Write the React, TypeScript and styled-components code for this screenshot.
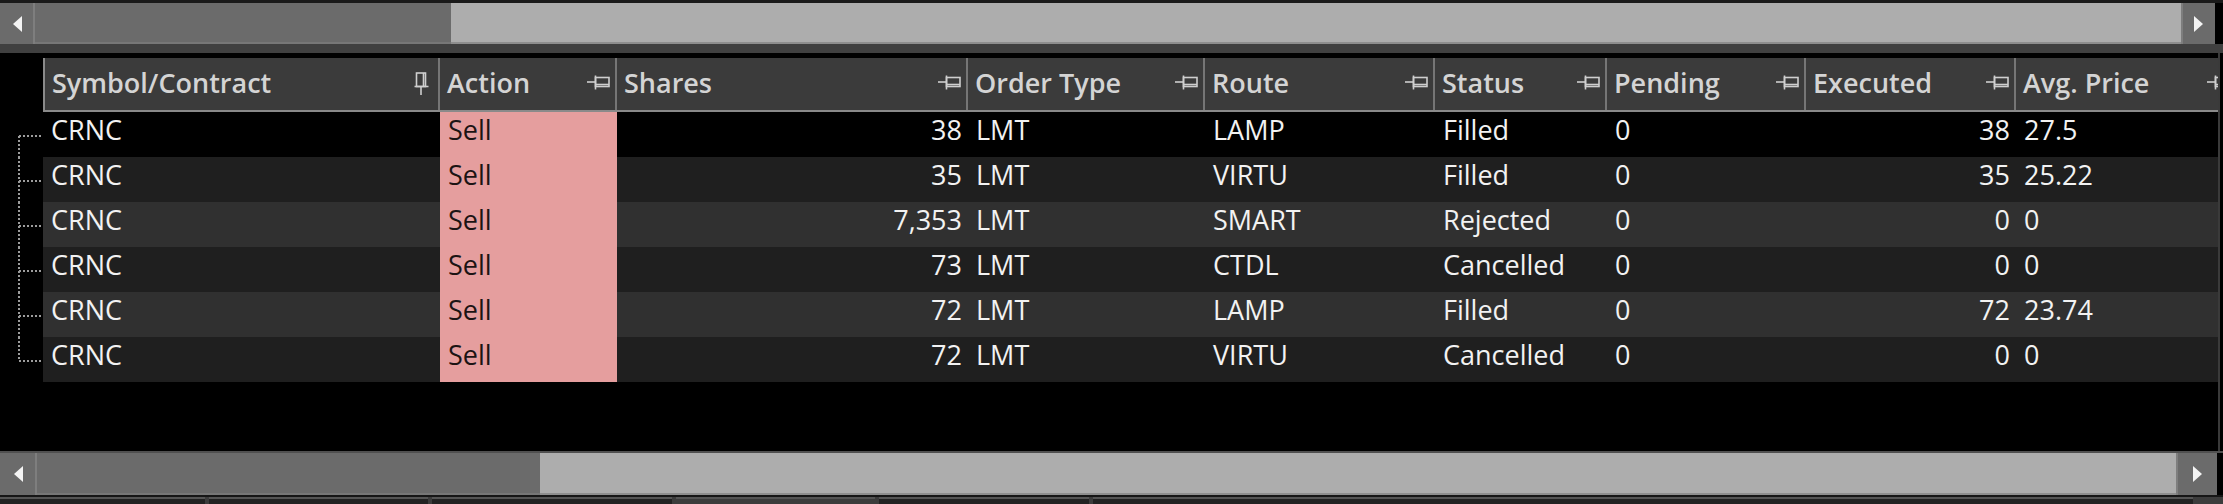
import React from 'react';
import styled, { createGlobalStyle } from 'styled-components';

const GlobalStyle = createGlobalStyle`
  html, body {
    margin: 0;
    padding: 0;
    background: #000;
  }
  body {
    font-family: "Open Sans", "Noto Sans", sans-serif;
  }
`;

/**
 * Window frame
 *
 */
const Frame = styled.div`
  width: 2223px;
  height: 504px;
  display: flex;
  flex-direction: column;
  background: #000;
  overflow: hidden;
`;

const TopEdge = styled.div`
  height: 3px;
  background: #1a1a1a;
`;

const Band = styled.div<{ $h: number; $color: string }>`
  height: ${(p) => p.$h}px;
  background: ${(p) => p.$color};
`;

/**
 * Horizontal scroll bar
 *
 */
const ScrollBar = styled.div<{ $h: number; $endGap: number }>`
  height: ${(p) => p.$h}px;
  display: flex;
  margin-right: ${(p) => p.$endGap}px;
  background: #adadad;
  box-shadow: inset 0 -2px 0 #8e8e8e;
`;

const ArrowButton = styled.div<{ $w: number; $side: 'left' | 'right' }>`
  width: ${(p) => p.$w}px;
  flex: none;
  display: flex;
  align-items: center;
  justify-content: center;
  background: #6b6b6b;
  ${(p) =>
    p.$side === 'left'
      ? 'border-right: 2px solid #7e7e7e;'
      : 'border-left: 2px solid #7e7e7e;'}
`;

const Thumb = styled.div<{ $w: number }>`
  width: ${(p) => p.$w}px;
  flex: none;
  background: #6b6b6b;
  box-shadow: inset 0 -2px 0 #777;
`;

const Track = styled.div`
  flex: 1;
`;

const Arrow = ({ side }: { side: 'left' | 'right' }) => (
  <svg width="10" height="16" viewBox="0 0 10 16">
    <polygon
      points={side === 'left' ? '10,0 10,16 1,8' : '0,0 0,16 9,8'}
      fill="#f4f4f4"
    />
  </svg>
);

const HScroll = ({
  h,
  leftW,
  rightW,
  thumb,
  endGap,
}: {
  h: number;
  leftW: number;
  rightW: number;
  thumb: number;
  endGap: number;
}) => (
  <ScrollBar $h={h} $endGap={endGap}>
    <ArrowButton $w={leftW} $side="left">
      <Arrow side="left" />
    </ArrowButton>
    <Thumb $w={thumb} />
    <Track />
    <ArrowButton $w={rightW} $side="right">
      <Arrow side="right" />
    </ArrowButton>
  </ScrollBar>
);

/**
 * Grid
 *
 */
const GridArea = styled.div`
  flex: 1;
  padding-top: 5px;
  background: #000;
  display: flex;
  flex-direction: column;
  width: 2220px;
  border-right: 2px solid #3a3a3a;
  box-sizing: border-box;
`;

const HeaderRow = styled.div`
  display: flex;
  height: 54px;
`;

const Gutter = styled.div`
  width: 43px;
  flex: none;
  background: #000;
`;

const HeaderCells = styled.div`
  flex: 1;
  display: flex;
  overflow: hidden;
  background: #3b3b3b;
  border-left: 2px solid #8a8a8a;
  border-bottom: 2px solid #8a8a8a;
`;

const HeaderCell = styled.div<{ $w: number }>`
  width: ${(p) => p.$w}px;
  flex: none;
  box-sizing: border-box;
  display: flex;
  align-items: center;
  padding: 0 4px 3px 7px;
  border-right: 2px solid #767676;
  font-size: 27px;
  line-height: 37px;
  font-weight: 600;
  color: #d4d4d4;
  white-space: nowrap;
  &:first-child {
    width: ${(p) => p.$w - 2}px;
  }
`;

const HeaderLabel = styled.span`
  flex: 1;
`;

const PinWrap = styled.span<{ $pinned: boolean }>`
  display: flex;
  flex: none;
  transform: ${(p) => (p.$pinned ? 'rotate(-90deg)' : 'none')};
`;

const PinIcon = ({ pinned }: { pinned: boolean }) => (
  <PinWrap $pinned={pinned}>
    <svg width="24" height="16" viewBox="0 0 24 16">
      <g stroke="#cfcfcf" strokeWidth="1.6" fill="none">
        <line x1="0" y1="7" x2="8" y2="7" />
        <line x1="8.5" y1="0.5" x2="8.5" y2="14.5" />
        <rect x="8.5" y="2.5" width="13.5" height="9" />
        <line x1="9" y1="9.5" x2="22" y2="9.5" />
      </g>
    </svg>
  </PinWrap>
);

const Body = styled.div`
  display: flex;
  flex-direction: column;
`;

const Row = styled.div`
  display: flex;
  height: 45px;
`;

const Cells = styled.div<{ $bg: string }>`
  flex: 1;
  display: flex;
  overflow: hidden;
  background: ${(p) => p.$bg};
`;

const Cell = styled.div<{
  $w: number;
  $align: 'left' | 'right';
  $highlight?: boolean;
}>`
  width: ${(p) => p.$w}px;
  flex: none;
  box-sizing: border-box;
  padding: 0 6px 0 8px;
  font-size: 27px;
  line-height: 35px;
  white-space: nowrap;
  text-align: ${(p) => p.$align};
  color: ${(p) => (p.$highlight ? '#1c1414' : '#f2f2f2')};
  background: ${(p) => (p.$highlight ? '#e59e9e' : 'transparent')};
`;

const TreeLine = ({ first, last }: { first: boolean; last: boolean }) => (
  <svg width="43" height="45" viewBox="0 0 43 45">
    <g stroke="#9c9c9c" strokeWidth="2" strokeDasharray="2 2" fill="none">
      <line x1="19" y1={first ? 24 : 0} x2="19" y2={last ? 24 : 45} />
      <line x1="19" y1="24" x2="43" y2="24" />
    </g>
  </svg>
);

/**
 * Bottom tab strip
 *
 */
const TabStrip = styled.div`
  height: 7px;
  display: flex;
  gap: 4px;
  background: #3c3c3c;
`;

const Tab = styled.div<{ $w: number; $active?: boolean }>`
  width: ${(p) => p.$w}px;
  flex: none;
  background: ${(p) => (p.$active ? '#3c3c3c' : '#222')};
  border-top: 2px solid #555;
`;

type Align = 'left' | 'right';

const columns: {
  key: string;
  label: string;
  width: number;
  align: Align;
  pinned: boolean;
}[] = [
  { key: 'symbol', label: 'Symbol/Contract', width: 397, align: 'left', pinned: true },
  { key: 'action', label: 'Action', width: 177, align: 'left', pinned: false },
  { key: 'shares', label: 'Shares', width: 351, align: 'right', pinned: false },
  { key: 'type', label: 'Order Type', width: 237, align: 'left', pinned: false },
  { key: 'route', label: 'Route', width: 230, align: 'left', pinned: false },
  { key: 'status', label: 'Status', width: 172, align: 'left', pinned: false },
  { key: 'pending', label: 'Pending', width: 199, align: 'left', pinned: false },
  { key: 'executed', label: 'Executed', width: 210, align: 'right', pinned: false },
  { key: 'price', label: 'Avg. Price', width: 221, align: 'left', pinned: false },
];

const orders: Record<string, string>[] = [
  { symbol: 'CRNC', action: 'Sell', shares: '38', type: 'LMT', route: 'LAMP', status: 'Filled', pending: '0', executed: '38', price: '27.5' },
  { symbol: 'CRNC', action: 'Sell', shares: '35', type: 'LMT', route: 'VIRTU', status: 'Filled', pending: '0', executed: '35', price: '25.22' },
  { symbol: 'CRNC', action: 'Sell', shares: '7,353', type: 'LMT', route: 'SMART', status: 'Rejected', pending: '0', executed: '0', price: '0' },
  { symbol: 'CRNC', action: 'Sell', shares: '73', type: 'LMT', route: 'CTDL', status: 'Cancelled', pending: '0', executed: '0', price: '0' },
  { symbol: 'CRNC', action: 'Sell', shares: '72', type: 'LMT', route: 'LAMP', status: 'Filled', pending: '0', executed: '72', price: '23.74' },
  { symbol: 'CRNC', action: 'Sell', shares: '72', type: 'LMT', route: 'VIRTU', status: 'Cancelled', pending: '0', executed: '0', price: '0' },
];

const rowColors = ['#000', '#1f1f1f', '#303030'];

const rowBg = (i: number) => (i === 0 ? rowColors[0] : i % 2 === 1 ? rowColors[1] : rowColors[2]);

const tabs = [
  { w: 205 },
  { w: 219 },
  { w: 240 },
  { w: 199, active: true },
  { w: 210 },
  { w: 1100 },
];

const App: React.FC = () => {
  return (
    <>
      <GlobalStyle />
      <Frame>
        <TopEdge />
        <HScroll h={41} leftW={33} rightW={32} thumb={416} endGap={8} />
        <Band $h={9} $color="#404040" />
        <GridArea>
          <HeaderRow>
            <Gutter />
            <HeaderCells>
              {columns.map((c) => (
                <HeaderCell key={c.key} $w={c.width}>
                  <HeaderLabel>{c.label}</HeaderLabel>
                  <PinIcon pinned={c.pinned} />
                </HeaderCell>
              ))}
            </HeaderCells>
          </HeaderRow>
          <Body>
            {orders.map((o, i) => (
              <Row key={i}>
                <Gutter>
                  <TreeLine first={i === 0} last={i === orders.length - 1} />
                </Gutter>
                <Cells $bg={rowBg(i)}>
                  {columns.map((c) => (
                    <Cell
                      key={c.key}
                      $w={c.width}
                      $align={c.align}
                      $highlight={c.key === 'action'}
                    >
                      {o[c.key]}
                    </Cell>
                  ))}
                </Cells>
              </Row>
            ))}
          </Body>
        </GridArea>
        <Band $h={2} $color="#505050" />
        <HScroll h={42} leftW={35} rightW={39} thumb={503} endGap={6} />
        <Band $h={2} $color="#161616" />
        <TabStrip>
          {tabs.map((t, i) => (
            <Tab key={i} $w={t.w} $active={t.active} />
          ))}
        </TabStrip>
      </Frame>
    </>
  );
};

export default App;
